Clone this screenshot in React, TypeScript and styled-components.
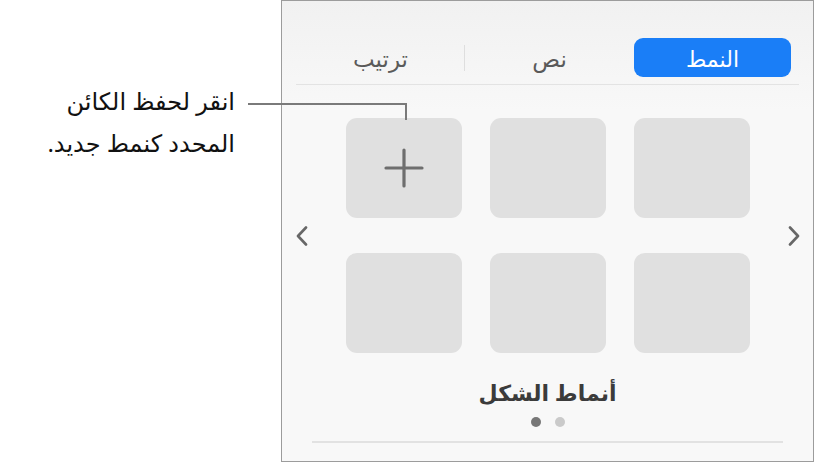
import { FC } from "react";
import styled, { createGlobalStyle } from "styled-components";

const FONT = `"Noto Sans", "DejaVu Sans", sans-serif`;

const TABS = ["النمط", "نص", "ترتيب"];
const TILE_COUNT = 6;

const GlobalStyle = createGlobalStyle`
	html, body {
		margin:0;
		padding:0;
		background:#fff;
		font-family:${ FONT };
	}
`;

const ChevronLeft:FC = () => (
	<svg width="14" height="20" viewBox="0 0 14 20">
		<path d="M11 1.5 L3 10 L11 18.5" fill="none" stroke="#676767" strokeWidth="2.6" strokeLinecap="round" strokeLinejoin="round" />
	</svg>
);

const ChevronRight:FC = () => (
	<svg width="14" height="20" viewBox="0 0 14 20">
		<path d="M3 1.5 L11 10 L3 18.5" fill="none" stroke="#676767" strokeWidth="2.6" strokeLinecap="round" strokeLinejoin="round" />
	</svg>
);

const PlusIcon:FC = () => (
	<svg width="40" height="40" viewBox="0 0 40 40">
		<path d="M20 2 V38 M2 20 H38" fill="none" stroke="#6e6e6e" strokeWidth="3.2" strokeLinecap="round" />
	</svg>
);

export default function App() {

	const dtabs = TABS.map((label, i) => (
		<Tab key={ "t" + i } $active={ i === 0 } $divider={ i === 2 }>
			{ label }
		</Tab>
	));

	const dtiles = Array.from({ length:TILE_COUNT }, (_, i) => (
		<Tile key={ "s" + i }>
			{ i === 2 ? <PlusIcon /> : null }
		</Tile>
	));

	return (
		<Page>
			<GlobalStyle />

			<Caption dir="rtl">
				انقر لحفظ الكائن
				<br />
				المحدد كنمط جديد.
			</Caption>

			<Leader />

			<Panel>
				<Tabs dir="rtl">
					{ dtabs }
				</Tabs>
				<Rule />

				<Carousel>
					<Arrow><ChevronLeft /></Arrow>
					<Grid dir="rtl">
						{ dtiles }
					</Grid>
					<Arrow><ChevronRight /></Arrow>
				</Carousel>

				<Title dir="rtl">أنماط الشكل</Title>
				<Dots>
					<Dot $on />
					<Dot />
				</Dots>
				<FootRule />
			</Panel>
		</Page>
	);
}

const Page = styled.div`
	position:relative;
	width:817px;
	height:465px;
	display:flex;
	align-items:flex-start;
	overflow:hidden;
`;

const Caption = styled.div`
	width:235px;
	padding-top:80px;
	text-align:right;
	font-size:24px;
	line-height:42px;
	color:#111;
`;

// elbow line running from the caption down to the add tile
const Leader = styled.div`
	position:absolute;
	left:248px;
	top:103px;
	width:157px;
	height:15px;
	border-top:2px solid #7a7a7a;
	border-right:2px solid #7a7a7a;
`;

const Panel = styled.div`
	margin-left:46px;
	width:533px;
	height:462px;
	box-sizing:border-box;
	border:1.5px solid #9c9c9c;
	background:linear-gradient(180deg, #f1f1f1 0px, #f8f8f8 110px, #f8f8f8 100%);
	display:flex;
	flex-direction:column;
	align-items:center;
`;

const Tabs = styled.div`
	margin-top:37px;
	width:503px;
	height:39px;
	display:grid;
	grid-template-columns:157px 1fr 1fr;
	align-items:center;
	padding-right:8px;
	box-sizing:border-box;
`;

const Tab = styled.div<{ $active?:boolean; $divider?:boolean }>`
	height:39px;
	display:flex;
	align-items:center;
	justify-content:center;
	border-radius:9px;
	font-size:${ p => p.$active ? 22 : 23 }px;
	color:${ p => p.$active ? "#fff" : "#5a5a5a" };
	background:${ p => p.$active ? "#1a7ef7" : "transparent" };
	position:relative;

	${ p => p.$divider ? `
		&::after {
			content:"";
			position:absolute;
			right:0;
			top:7px;
			height:26px;
			border-right:1px solid #dedede;
		}
	` : "" }
`;

const Rule = styled.div`
	margin-top:7px;
	width:503px;
	height:1px;
	background:#e3e3e3;
`;

const Carousel = styled.div`
	margin-top:33px;
	width:506px;
	display:flex;
	align-items:center;
	justify-content:space-between;
`;

const Arrow = styled.div`
	width:14px;
	height:20px;
	display:flex;
`;

const Grid = styled.div`
	display:grid;
	grid-template-columns:repeat(3, 116px);
	grid-auto-rows:100px;
	column-gap:28px;
	row-gap:35px;
`;

const Tile = styled.div`
	background:#e0e0e0;
	border-radius:11px;
	display:flex;
	align-items:center;
	justify-content:center;
`;

const Title = styled.div`
	margin-top:22px;
	font-size:22px;
	line-height:34px;
	font-weight:700;
	color:#3b3b3b;
`;

const Dots = styled.div`
	margin-top:8px;
	display:flex;
	gap:14px;
`;

const Dot = styled.div<{ $on?:boolean }>`
	width:10px;
	height:10px;
	border-radius:50%;
	background:${ p => p.$on ? "#777" : "#cacaca" };
`;

const FootRule = styled.div`
	margin-top:14px;
	width:471px;
	height:2px;
	background:#e2e2e2;
`;
